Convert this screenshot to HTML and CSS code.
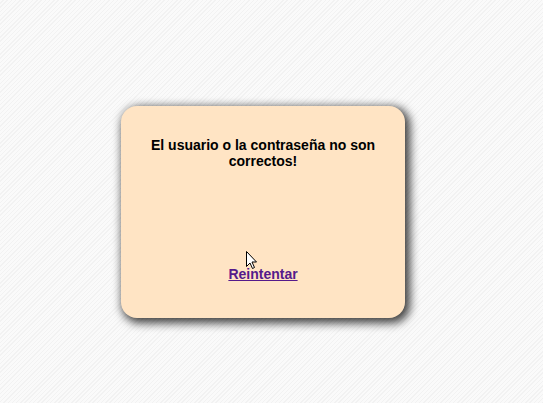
FILE: index.html
```html
<!DOCTYPE html>
<html>
<head>
<meta charset="utf-8">
<link rel="stylesheet" href="styles.css">
</head>
<body>
<div class="dialog">
  <p class="message">El usuario o la contraseña no son correctos!</p>
  <a class="retry" href="#">Reintentar</a>
</div>
<svg class="cursor" width="12" height="19" viewBox="0 0 12 19"><path d="M0.5 0.5 L0.5 15.5 L4 12 L6.5 17.5 L8.5 16.5 L6 11 L10.5 11 Z" fill="#fff" stroke="#000" stroke-width="1"/></svg>
</body>
</html>
```
FILE: styles.css
```css
html, body {
  margin: 0;
  padding: 0;
  height: 100%;
}
body {
  position: relative;
  font-family: "Liberation Sans", Arial, sans-serif;
  background-color: #f7f7f7;
  background-image: repeating-linear-gradient(-45deg, #f2f2f2 0px, #f2f2f2 1px, #fafafa 1px, #fafafa 3px);
  padding-top: 106px;
  padding-left: 121px;
  box-sizing: border-box;
}
.dialog {
  width: 284px;
  height: 212px;
  box-sizing: border-box;
  background: #ffe4c4;
  border-radius: 16px;
  box-shadow: 3px 3px 10px 2px rgba(0,0,0,0.75);
  display: flex;
  flex-direction: column;
  align-items: center;
  padding: 31px 20px 0;
  text-align: center;
}
.message {
  margin: 0;
  font-size: 14px;
  font-weight: bold;
  line-height: 16px;
  color: #000;
}
.retry {
  margin-top: 97px;
  font-size: 14px;
  font-weight: bold;
  line-height: 16px;
  color: #551a8b;
  text-decoration: underline;
}
.cursor {
  position: absolute;
  left: 246px;
  top: 251px;
}
```
